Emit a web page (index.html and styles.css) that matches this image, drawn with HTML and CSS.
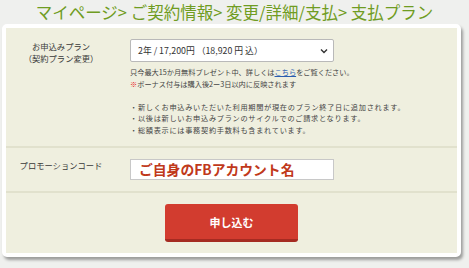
FILE: index.html
```html
<!DOCTYPE html>
<html lang="ja">
<head>
<meta charset="utf-8">
<title>支払プラン</title>
<link rel="stylesheet" href="styles.css">
</head>
<body>
<h1 class="title">マイページ&gt; ご契約情報&gt; 変更/詳細/支払&gt; 支払プラン</h1>
<div class="card">
  <div class="inner">
    <div class="row row-plan">
      <div class="label">お申込みプラン<br>（契約プラン変更）</div>
      <div class="field">
        <div class="select">
          <span>2年 / 17,200円 （18,920 円 込）</span>
          <svg class="chev" width="8" height="6" viewBox="0 0 8 6"><path d="M1 1.5 L4 4.5 L7 1.5" fill="none" stroke="#333" stroke-width="1.4"/></svg>
        </div>
        <div class="notes">
          <p>只今最大15か月無料プレゼント中、詳しくは<a class="link" href="#">こちら</a>をご覧ください。</p>
          <p><span class="mark">※</span>ボーナス付与は購入後2ー3日以内に反映されます</p>
          <p class="bullet gap">・新しくお申込みいただいた利用期間が現在のプラン終了日に追加されます。</p>
          <p class="bullet">・以後は新しいお申込みプランのサイクルでのご請求となります。</p>
          <p class="bullet">・総額表示には事務契約手数料も含まれています。</p>
        </div>
      </div>
    </div>
    <div class="row row-promo">
      <div class="label">プロモーションコード</div>
      <div class="field">
        <div class="input">ご自身のFBアカウント名</div>
      </div>
    </div>
    <div class="row-submit">
      <button class="btn" type="button">申し込む</button>
    </div>
  </div>
</div>
</body>
</html>
```
FILE: styles.css
```css
html, body {
  margin: 0;
  padding: 0;
}
body {
  background: #eff0ee;
  font-family: "Noto Sans CJK JP", "Noto Sans", sans-serif;
  color: #333;
  width: 469px;
  height: 268px;
  overflow: hidden;
}
.title {
  margin: 0;
  height: 24px;
  font-size: 16.5px;
  line-height: 24px;
  font-weight: normal;
  color: #6f9c22;
  text-align: center;
  white-space: nowrap;
}
.card {
  margin: 0 8px 0 2px;
  border: 4px solid #fff;
  border-radius: 5px;
  box-shadow: 2px 3px 3px rgba(0, 0, 0, 0.35);
  background: #fff;
}
.inner {
  background: #efefdf;
}
.row {
  display: grid;
  grid-template-columns: 110px 1fr;
  column-gap: 14px;
  border-bottom: 2px solid #e1e1cd;
}
.row-plan {
  padding: 11px 0 10px;
}
.row-promo {
  padding: 11px 0 11px;
}
.label {
  text-align: center;
  font-size: 8.3px;
  line-height: 12px;
  color: #3a3a3a;
  padding-top: 1px;
}
.row-promo .label {
  padding-top: 0;
}
.field {
  width: 204px;
}
.select {
  height: 23px;
  box-sizing: border-box;
  border: 1px solid #b9b9b9;
  border-radius: 2px;
  background: #fff;
  display: flex;
  align-items: center;
  justify-content: space-between;
  padding: 0 5px 0 7px;
  font-size: 8.8px;
  color: #333;
}
.notes {
  margin-top: 5px;
  width: 260px;
  font-size: 7.2px;
  line-height: 11.5px;
  color: #444;
  white-space: nowrap;
}
.notes p {
  margin: 0;
}
.notes .bullet {
  letter-spacing: 0.7px;
}
.notes .gap {
  margin-top: 11.5px;
}
.link {
  color: #2a5db0;
  text-decoration: underline;
}
.mark {
  color: #e8231e;
}
.input {
  height: 21px;
  box-sizing: border-box;
  border: 1px solid #c8c8c8;
  background: #fff;
  padding-left: 8px;
  font-size: 13.8px;
  line-height: 19px;
  font-weight: bold;
  color: #c0381a;
  white-space: nowrap;
}
.row-submit {
  display: flex;
  justify-content: center;
  padding: 11px 0 11px;
}
.btn {
  width: 133px;
  height: 38px;
  border: 0;
  border-bottom: 3px solid #a52b22;
  border-radius: 3px;
  background: #d23c2f;
  color: #fff;
  font-family: "Noto Sans CJK JP", sans-serif;
  font-size: 11px;
  font-weight: bold;
  padding: 0;
}
```
